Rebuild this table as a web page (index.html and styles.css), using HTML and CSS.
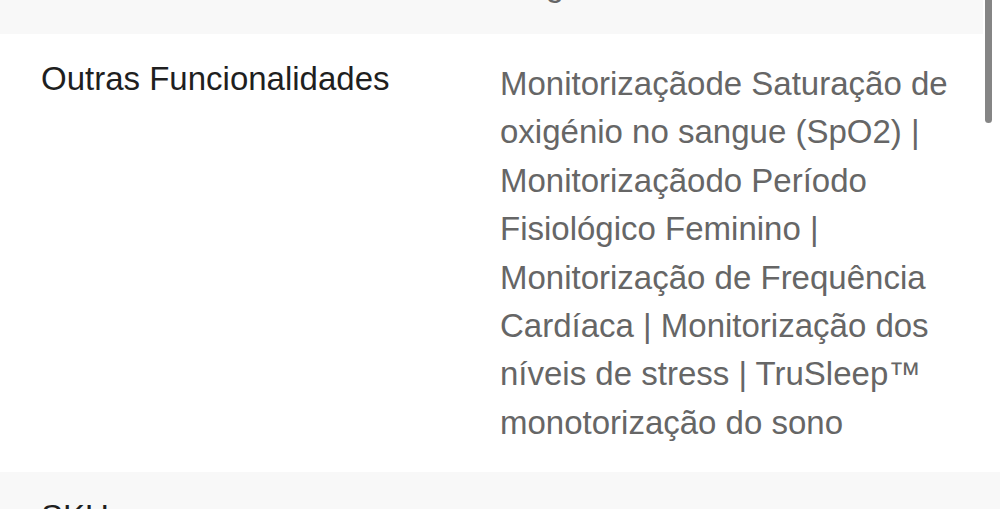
FILE: index.html
```html
<!DOCTYPE html>
<html lang="pt">
<head>
<meta charset="utf-8">
<link rel="stylesheet" href="styles.css">
</head>
<body>
<div class="specs">
  <div class="row alt">
    <div class="label"></div>
    <div class="value">50 g</div>
  </div>
  <div class="row">
    <div class="label">Outras Funcionalidades</div>
    <div class="value">Monitorizaçãode Saturação de oxigénio no sangue (SpO2) | Monitorizaçãodo Período Fisiológico Feminino | Monitorização de Frequência Cardíaca | Monitorização dos níveis de stress | TruSleep™ monotorização do sono</div>
  </div>
  <div class="row alt">
    <div class="label">SKU</div>
    <div class="value"></div>
  </div>
</div>
<div class="scroll-track"><div class="scroll-thumb"></div></div>
</body>
</html>
```
FILE: styles.css
```css
html, body {
  margin: 0;
  padding: 0;
  background: #ffffff;
  overflow: hidden;
}
body {
  font-family: "Liberation Sans", Arial, sans-serif;
  font-size: 33px;
}
.specs {
  margin-top: -65.4px;
}
.row {
  display: grid;
  grid-template-columns: 459px 460px;
  padding: 26px 0 25px 41px;
  background: #ffffff;
}
.row.alt {
  background: #f8f8f8;
}
.label {
  color: #1f1f1f;
  line-height: 38px;
}
.value {
  color: #666666;
  line-height: 48.4px;
}
.scroll-track {
  position: fixed;
  top: 0;
  left: 983px;
  width: 17px;
  height: 126px;
  background: #ffffff;
}
.scroll-thumb {
  margin-left: 2px;
  width: 7px;
  height: 123px;
  background: #858585;
  border-radius: 0 0 4px 4px;
}
```
